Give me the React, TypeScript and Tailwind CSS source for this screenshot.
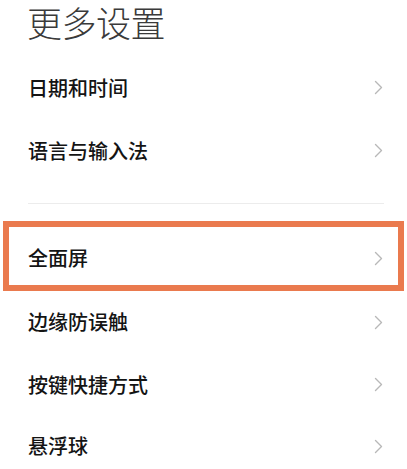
import React from "react";

const font = { fontFamily: '"Noto Sans CJK SC", "Noto Sans", sans-serif' };

function Chevron() {
  return (
    <svg width="9" height="15" viewBox="0 0 9 15" fill="none">
      <polyline points="1.5,1.5 7.5,7.5 1.5,13.5" stroke="#b8b8b8" strokeWidth="1.4" strokeLinecap="round" strokeLinejoin="round" />
    </svg>
  );
}

function Row({ label, h }: { label: string; h: string }) {
  return (
    <div className={`flex items-center justify-between pl-[28px] pr-[24px] ${h}`}>
      <span className="text-[20px] font-medium text-[#141414] leading-none">{label}</span>
      <Chevron />
    </div>
  );
}

export default function App() {
  return (
    <div className="w-[407px] h-[469px] overflow-hidden bg-white" style={font}>
      {/* page title */}
      <div className="h-[56px] pl-[27px]">
        <h1 className="text-[35px] font-light text-[#3a3a3a] leading-[44px] tracking-[-0.5px]">更多设置</h1>
      </div>

      <Row label="日期和时间" h="h-[63px]" />
      <Row label="语言与输入法" h="h-[63px]" />

      <div className="pt-[21px] pb-[17px] px-[28px]">
        <div className="h-px bg-[#ececec] mr-[-5px]" />
      </div>

      {/* highlighted entry */}
      <div className="mx-[3px] border-[6px] border-[#ea7a4e] h-[70px] flex items-center justify-between pl-[19px] pr-[15px] pt-[4px]">
        <span className="text-[20px] font-medium text-[#141414] leading-none">全面屏</span>
        <Chevron />
      </div>

      <Row label="边缘防误触" h="h-[62px]" />
      <Row label="按键快捷方式" h="h-[63px]" />
      <Row label="悬浮球" h="h-[60px]" />
    </div>
  );
}
